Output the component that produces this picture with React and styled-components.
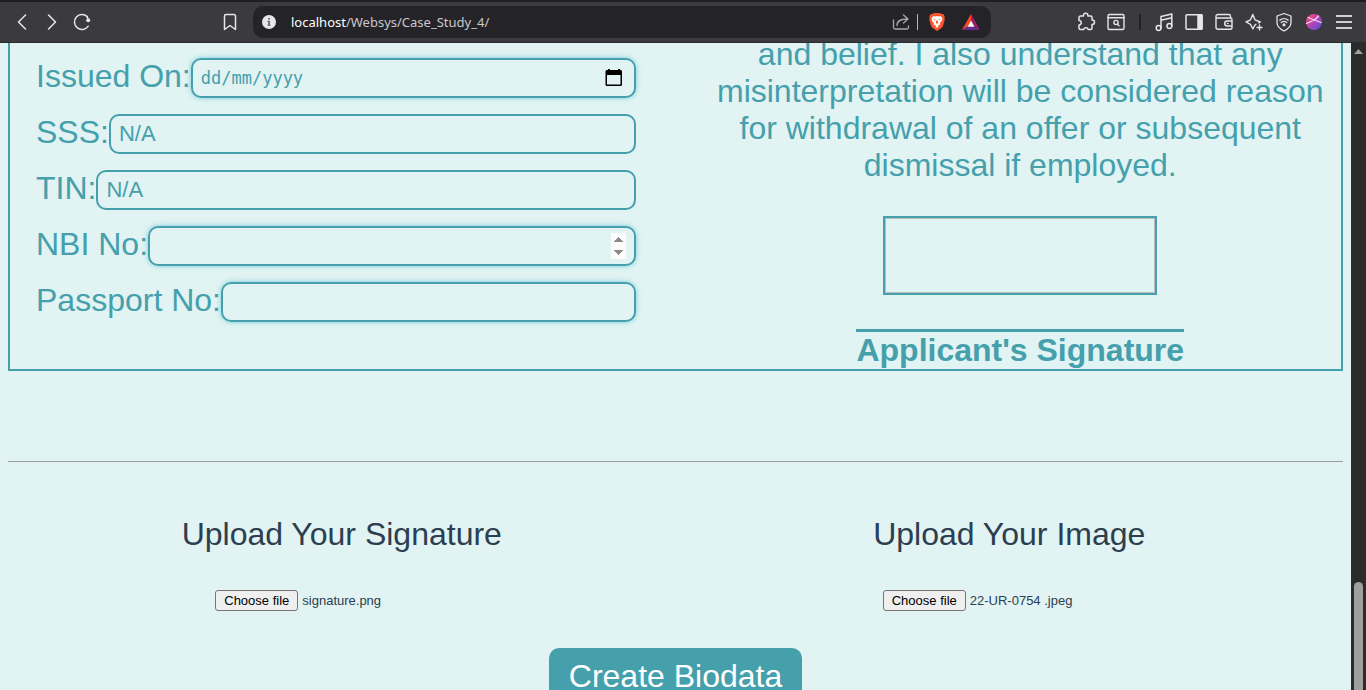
import React from "react";
import styled, { createGlobalStyle, css } from "styled-components";

const teal = "#45a0ac";
const mint = "#e1f3f3";
const sans = '"Liberation Sans", Arial, sans-serif';

const GlobalStyle = createGlobalStyle`
  *, *::before, *::after { box-sizing: border-box; }
  body { margin: 0; background: ${mint}; font-family: ${sans}; }
`;

const Window = styled.div`
  display: flex;
  flex-direction: column;
  height: 100vh;
  overflow: hidden;
`;

const Toolbar = styled.header`
  display: flex;
  flex: none;
  align-items: center;
  height: 43px;
  border-top: 2px solid #1f1e23;
  border-bottom: 1px solid #2c2b30;
  background: #3b3a3f;
`;

const NavGroup = styled.nav`
  display: flex;
  width: 253px;
  padding: 0 8px 0 7px;
`;

const ToolGroup = styled.div`
  display: flex;
  align-items: center;
  justify-content: flex-end;
  width: 375px;
  padding-right: 7px;
`;

const IconButton = styled.button`
  display: flex;
  align-items: center;
  justify-content: center;
  width: 30px;
  height: 30px;
  padding: 0;
  border: 0;
  background: none;
  color: ${(p) => p.$tint || "#e6e5ea"};
  margin-left: ${(p) => p.$before || "0"};
`;

const Divider = styled.span`
  width: ${(p) => (p.$light ? "1px" : "2px")};
  height: 16px;
  margin: ${(p) => (p.$light ? "0 4px 0 1px" : "0 8px")};
  background: ${(p) => (p.$light ? "#b5b4b9" : "#222126")};
`;

const AddressBar = styled.div`
  display: flex;
  flex: 1;
  align-items: center;
  min-width: 0;
  height: 32px;
  padding: 0 5px 0 1px;
  border-radius: 10px;
  background: #242328;
`;

const Address = styled.div`
  flex: 1;
  padding-left: 7px;
  overflow: hidden;
  color: #c9c8cd;
  font: 13px/20px "Noto Sans", "Open Sans", sans-serif;
  white-space: nowrap;
`;

const Host = styled.span`
  color: #ffffff;
`;

const Viewport = styled.div`
  display: flex;
  flex: 1;
  min-height: 0;
`;

const Page = styled.main`
  flex: 1;
  min-width: 0;
  padding: 0 8px;
  overflow: hidden;
  background: ${mint};
`;

const ScrollTrack = styled.div`
  display: flex;
  flex: none;
  flex-direction: column;
  align-items: center;
  justify-content: space-between;
  width: 15px;
  padding-top: 6px;
  background: #2b2b2b;
`;

const ScrollThumb = styled.div`
  width: 9px;
  height: 108px;
  border-radius: 5px 5px 0 0;
  background: #9f9f9f;
`;

const Panel = styled.section`
  display: grid;
  grid-template-columns: 1fr 1fr;
  margin-top: -7px;
  border: solid ${teal};
  border-width: 0 2px 2px;
  color: ${teal};
  font-size: 32px;
  line-height: 37px;
`;

const Fields = styled.div`
  display: flex;
  flex-direction: column;
  gap: 16px;
  padding: 22px 40px 0 26px;
`;

const FieldRow = styled.div`
  display: flex;
  align-items: flex-start;
  height: 40px;
`;

const FieldBox = styled.div`
  display: flex;
  flex: 1;
  align-items: center;
  min-width: 0;
  height: 40px;
  padding: 0 8px;
  border: 2px solid ${teal};
  border-radius: 10px;
  ${(p) => p.$glow && css`box-shadow: 0 0 5px rgba(69, 190, 205, 0.7);`}
`;

const FieldInput = styled.input`
  flex: 1;
  min-width: 0;
  width: 100%;
  height: 26px;
  padding: 0;
  border: 0;
  outline: 0;
  background: transparent;
  color: ${teal};
  font-family: ${(p) => (p.$mono ? '"DejaVu Sans Mono", monospace' : sans)};
  font-size: ${(p) => (p.$mono ? "17px" : "22px")};
  &::placeholder { color: ${teal}; opacity: 1; }
  &::-webkit-inner-spin-button { opacity: 1; height: 26px; }
`;

const CalendarButton = styled.button`
  display: flex;
  padding: 0;
  border: 0;
  background: none;
  color: #000000;
`;

const Declaration = styled.div`
  display: flex;
  flex-direction: column;
  align-items: center;
  padding-left: 24px;
  text-align: center;
`;

const Statement = styled.p`
  margin: 0;
`;

const SignatureFrame = styled.div`
  width: 274px;
  height: 79px;
  margin: 32px 0 34px;
  border: 2px solid ${teal};
  box-shadow: inset 0 0 0 1px #bdbfbf;
`;

const SignatureCaption = styled.strong`
  border-top: 3px solid ${teal};
`;

const Rule = styled.hr`
  height: 1px;
  margin: 90px 0 54px;
  border: 0;
  background: #a09a9b;
`;

const Uploads = styled.div`
  display: grid;
  grid-template-columns: 1fr 1fr;
  justify-items: center;
  color: #2c3e50;
`;

const Upload = styled.section`
  display: flex;
  flex-direction: column;
  align-items: center;
  gap: 37px;
`;

const UploadTitle = styled.h2`
  margin: 0;
  font-size: 32px;
  font-weight: 400;
  line-height: 37px;
`;

const FilePicker = styled.label`
  display: flex;
  align-items: center;
  gap: 4px;
  width: 253px;
  font-size: 13px;
  line-height: 19px;
`;

const FileInput = styled.input`
  position: absolute;
  width: 1px;
  height: 1px;
  opacity: 0;
`;

const FileButton = styled.span`
  padding: 0 8px;
  border: 1px solid #767676;
  border-radius: 3px;
  background: #efefef;
  color: #000000;
`;

const SubmitButton = styled.button`
  display: block;
  margin: 37px auto 0;
  padding: 10px 20px;
  border: 0;
  border-radius: 10px;
  background: ${teal};
  color: #ffffff;
  font: 32px/37px ${sans};
`;

const Icon = ({ size = 20, children, ...rest }) => (
  <svg width={size} height={size} viewBox={`0 0 ${size} ${size}`} fill="none" stroke="currentColor"
    strokeWidth="1.5" strokeLinecap="round" strokeLinejoin="round" aria-hidden="true" {...rest}>
    {children}
  </svg>
);

const BackIcon = () => <Icon><path d="M13.500 3 6.500 10l7 7" /></Icon>;
const ForwardIcon = () => <Icon><path d="m6.500 3 7 7-7 7" /></Icon>;
const ReloadIcon = () => (
  <Icon><path d="M15.300 4.700A7.500 7.500 0 1 0 16.200 14.200" /><path d="M15 4.300 16.300 8" /><circle cx="16.200" cy="8.300" r="2" fill="currentColor" stroke="none" /></Icon>
);
const BookmarkIcon = () => <Icon><path d="M4.500 4a1.500 1.500 0 0 1 1.500-1.500h8A1.500 1.500 0 0 1 15.500 4v13.500L10 13.500l-5.500 4Z" /></Icon>;
const InfoIcon = () => (
  <Icon stroke="none"><circle cx="10" cy="10" r="7" fill="#e6e5ea" /><path d="M9.300 6h1.600v1.600H9.300zM8.600 8.700h2.200v4.100h.7v1H8.600v-1h.7V9.700h-.7z" fill="#55545a" /></Icon>
);
const ShareIcon = () => <Icon strokeWidth="1.300"><path d="M2.500 8v7.500A1.500 1.500 0 0 0 4 17h12a1.500 1.500 0 0 0 1.500-1.500V14M6 13.500C6 9 9 7 16.500 7M12.500 3l4.500 4-4.500 4" /></Icon>;
const LionIcon = () => (
  <Icon stroke="none">
    <path d="m5.500 2 1.500-1h6l1.500 1 2.200.3 1.100 2.700-.5 1.500.5 1-1.800 6.500-1.200 1.800L10 19l-4.800-3.200L4 14 2.200 7.500l.5-1-.5-1.500 1.100-2.700Z" fill="#fb542b" />
    <path d="M4.500 6.300 6.500 4l2 .4L10 4l1.500.4 2-.4 2 2.300-.6 2.200-2 2.500.5 1.200-1.200 1-1.400-.6.9 1.500L10 16l-1.700-1.500.9-1.500-1.400.6-1.200-1 .5-1.200-2-2.500Z" fill="#fff" />
    <path d="m5.700 7 2.700.6-.5 1Zm8.600 0-2.700.6.5 1ZM9.300 8.500h1.400l.5 2.500-1.200.7-1.200-.7Z" fill="#fb542b" />
  </Icon>
);
const TriangleIcon = () => (
  <Icon stroke="none">
    <path d="M10 2 1 18l5.500-3.200L10 8.500Z" fill="#ff4724" />
    <path d="M10 2v6.500l3.500 6.300L19 18Z" fill="#9e1f63" />
    <path d="m1 18 5.500-3.200h7L19 18Z" fill="#662d91" />
    <path d="m10 8.500 3.500 6.300h-7Z" fill="#fff" />
  </Icon>
);
const PuzzleIcon = () => (
  <Icon><path d="M4.500 4h3V3.500a2.200 2.200 0 0 1 4.400 0V4h3A1.100 1.100 0 0 1 16 5.100V8h.3a2.200 2.200 0 0 1 0 4.400H16v3.900a1.200 1.200 0 0 1-1.200 1.200h-2.600a2.300 2.300 0 0 0-4.500 0H4.500a1.500 1.500 0 0 1-1.500-1.500v-3a2.200 2.200 0 0 0 0-4.400V5.500A1.500 1.500 0 0 1 4.500 4Z" /></Icon>
);
const PageSearchIcon = () => (
  <Icon strokeWidth="1.400"><rect x="2" y="2.500" width="16" height="15" rx="1.500" /><path d="M2 5.700h16m-5 8-1.700-1.700" /><circle cx="10" cy="10.500" r="2.100" /></Icon>
);
const MusicIcon = () => <Icon><circle cx="4.600" cy="16" r="2.400" /><circle cx="15.400" cy="14" r="2.400" /><path d="M7 16V4.500L17.800 2v12M7 8.200l10.800-2.500" /></Icon>;
const SidebarIcon = () => <Icon><rect x="2" y="2.700" width="16" height="14.600" rx="1" /><path d="M14 3h4v14h-4z" fill="currentColor" /></Icon>;
const WalletIcon = () => (
  <Icon strokeWidth="1.400"><path d="M16.500 6V4.200A1.700 1.700 0 0 0 14.800 2.500H4A2 2 0 0 0 2 4.500v10.800a2 2 0 0 0 2 2h12.500a1.500 1.500 0 0 0 1.500-1.500V7.500A1.500 1.500 0 0 0 16.500 6H2.500M18 9h-4.800a2.500 2.500 0 0 0 0 5H18M13.500 11.500h.5" /></Icon>
);
const SparkleIcon = () => (
  <Icon strokeWidth="1.400"><path d="M12 12.300 10.800 13.200 8.800 17 6.500 12.300 2 10l4.500-2.200L8.800 2.500 11 7.800 16.300 10l-1.500.9M15.500 13v5M13 15.500h5" /></Icon>
);
const ShieldIcon = () => (
  <Icon strokeWidth="1.300"><path d="m10 1.500 7 2.500v6.500c0 4-3 6.500-7 8.500-4-2-7-4.500-7-8.500V4ZM5.800 8.200a6.500 6.500 0 0 1 8.400 0M7.200 10.500a4.500 4.500 0 0 1 5.600 0" /><circle cx="10" cy="12.800" r="1" fill="currentColor" /></Icon>
);
const OrbIcon = () => (
  <Icon stroke="none">
    <defs><linearGradient id="orb" x1="0" y1="0" x2="1" y2="1"><stop offset="0.150" stopColor="#f2417d" /><stop offset="0.500" stopColor="#b344b6" /><stop offset="1" stopColor="#4a4fe0" /></linearGradient></defs>
    <circle cx="10" cy="10" r="8" fill="url(#orb)" />
    <path d="M4 5.500 10.500 8 17 10.500M2.500 11.500 10.500 8 14.500 4" stroke="#f7d9f0" strokeWidth="1.200" />
  </Icon>
);
const MenuIcon = () => <Icon strokeWidth="2" strokeLinecap="butt"><path d="M2 4h16M2 10h16M2 16h16" /></Icon>;
const CalendarIcon = () => (
  <Icon size={24} stroke="none"><path d="M19 4h-1V3h-2v1H8V3H6v1H5a1.500 1.500 0 0 0-1.500 1.500v13A1.500 1.500 0 0 0 5 20h13.500a1.500 1.500 0 0 0 1.500-1.500v-13A1.500 1.500 0 0 0 19 4Zm-.500 14.500H5V9h13.500Z" fill="currentColor" /></Icon>
);

const tools = [
  { name: "Media", Glyph: MusicIcon },
  { name: "Sidebar", Glyph: SidebarIcon },
  { name: "Wallet", Glyph: WalletIcon },
  { name: "Assistant", Glyph: SparkleIcon },
  { name: "VPN", Glyph: ShieldIcon },
  { name: "Profile", Glyph: OrbIcon },
  { name: "Menu", Glyph: MenuIcon, tint: "#cfced3" },
];

const fields = [
  { id: "issued", label: "Issued On:", glow: true, mono: true, placeholder: "dd/mm/yyyy", calendar: true },
  { id: "sss", label: "SSS:", value: "N/A" },
  { id: "tin", label: "TIN:", value: "N/A" },
  { id: "nbi", label: "NBI No:", type: "number", glow: true },
  { id: "passport", label: "Passport No:", glow: true },
];

const uploads = [
  { id: "signature", title: "Upload Your Signature", file: "signature.png" },
  { id: "image", title: "Upload Your Image", file: "22-UR-0754 .jpeg" },
];

const Field = ({ id, label, value, type = "text", glow, mono, placeholder, calendar }) => (
  <FieldRow>
    <label htmlFor={id}>{label}</label>
    <FieldBox $glow={glow}>
      <FieldInput id={id} type={type} defaultValue={value} placeholder={placeholder} $mono={mono} />
      {calendar && <CalendarButton type="button" aria-label="Open calendar"><CalendarIcon /></CalendarButton>}
    </FieldBox>
  </FieldRow>
);

export default function App() {
  return (
    <Window>
      <GlobalStyle />
      <Toolbar>
        <NavGroup>
          <IconButton aria-label="Back"><BackIcon /></IconButton>
          <IconButton aria-label="Forward"><ForwardIcon /></IconButton>
          <IconButton aria-label="Reload"><ReloadIcon /></IconButton>
          <IconButton aria-label="Bookmark" $before="auto"><BookmarkIcon /></IconButton>
        </NavGroup>
        <AddressBar>
          <IconButton aria-label="Site information"><InfoIcon /></IconButton>
          <Address><Host>localhost</Host>/Websys/Case_Study_4/</Address>
          <IconButton aria-label="Share" $tint="#a9a8ad"><ShareIcon /></IconButton>
          <Divider $light />
          <IconButton aria-label="Shields"><LionIcon /></IconButton>
          <IconButton aria-label="Rewards" $before="4px"><TriangleIcon /></IconButton>
        </AddressBar>
        <ToolGroup>
          <IconButton aria-label="Extensions"><PuzzleIcon /></IconButton>
          <IconButton aria-label="Search tabs"><PageSearchIcon /></IconButton>
          <Divider />
          {tools.map(({ name, Glyph, tint }) => (
            <IconButton key={name} aria-label={name} $tint={tint}><Glyph /></IconButton>
          ))}
        </ToolGroup>
      </Toolbar>
      <Viewport>
        <Page>
          <form>
            <Panel>
              <Fields>
                {fields.map((f) => <Field key={f.id} {...f} />)}
              </Fields>
              <Declaration>
                <Statement>
                  and belief. I also understand that any misinterpretation will be considered
                  reason for withdrawal of an offer or subsequent dismissal if employed.
                </Statement>
                <SignatureFrame />
                <SignatureCaption>Applicant's Signature</SignatureCaption>
              </Declaration>
            </Panel>
            <Rule />
            <Uploads>
              {uploads.map(({ id, title, file }) => (
                <Upload key={id}>
                  <UploadTitle>{title}</UploadTitle>
                  <FilePicker>
                    <FileInput type="file" name={id} />
                    <FileButton>Choose file</FileButton>
                    {file}
                  </FilePicker>
                </Upload>
              ))}
            </Uploads>
            <SubmitButton type="button">Create Biodata</SubmitButton>
          </form>
        </Page>
        <ScrollTrack>
          <svg width="9" height="5" viewBox="0 0 9 5" aria-hidden="true"><path d="M4.500 0 9 5H0Z" fill="#9f9f9f" /></svg>
          <ScrollThumb />
        </ScrollTrack>
      </Viewport>
    </Window>
  );
}
